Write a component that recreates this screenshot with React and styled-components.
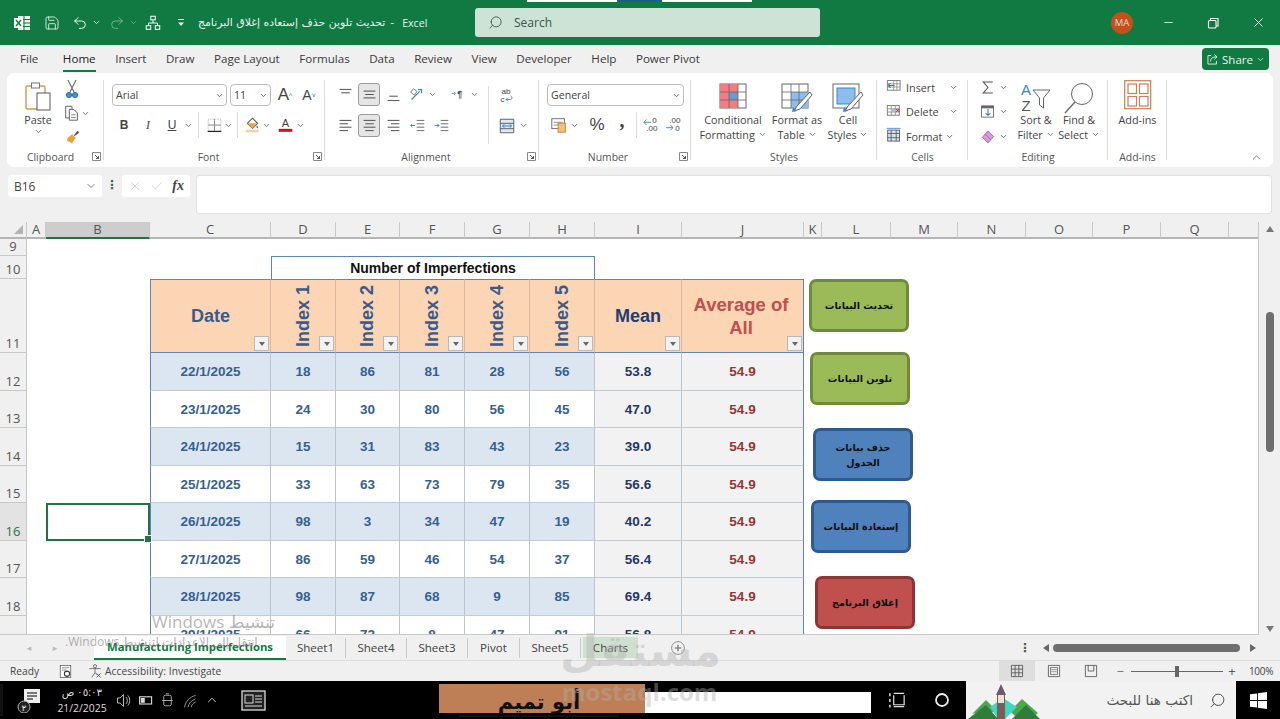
import React from "react";
import styled, { createGlobalStyle } from "styled-components";
import { Search, Minus, X, ChevronDown, ChevronUp, Check, Undo2, Redo2, Save } from "lucide-react";

const Global = createGlobalStyle`
  html,body{margin:0;padding:0;width:1280px;height:719px;overflow:hidden;background:#f0f0f0;}
  *{box-sizing:border-box;}
  body{font-family:"Open Sans","DejaVu Sans",sans-serif;}
`;
const Page = styled.div`position:relative;width:1280px;height:719px;overflow:hidden;display:flex;flex-direction:column;`;

/* ---------- title bar ---------- */
const TitleBar = styled.header`position:relative;height:45px;flex:none;background:#117a43;color:#fff;display:flex;align-items:center;`;
const TopStrip = styled.div`position:absolute;top:0;left:527px;width:225px;height:2px;background:linear-gradient(90deg,#fff 0 40%,#1b5e8a 40% 60%,#fff 60%);`;
const QuickBar = styled.div`width:475px;flex:none;display:flex;align-items:center;padding-left:10px;`;
const Slot = styled.span`display:inline-flex;flex:none;align-items:center;justify-content:center;width:${p=>p.$w||20}px;height:${p=>p.$h||20}px;color:${p=>p.$c||"inherit"};margin-left:${p=>p.$ml||0}px;opacity:${p=>p.$o||1};`;
const DocTitle = styled.span`font-size:10.9px;margin-left:9px;white-space:nowrap;color:#e8f3ec;display:flex;gap:5px;align-items:center;font-family:"DejaVu Sans",sans-serif;`;
const DocApp = styled.span`font:10.6px "Open Sans",sans-serif;margin-left:3px;`;
const SearchBox = styled.div`width:345px;height:29px;background:#cde3d6;border-radius:3px;display:flex;align-items:center;padding-left:13px;gap:11px;color:#37574a;font-size:12px;`;
const WinControls = styled.div`margin-left:auto;display:flex;align-items:center;padding-right:12px;`;
const Avatar = styled.span`width:22px;height:22px;border-radius:50%;background:#c4501a;color:#f3d9c9;font-size:9.5px;display:flex;align-items:center;justify-content:center;margin-right:25px;`;

/* ---------- tabs ---------- */
const TabRow = styled.nav`height:28px;flex:none;background:#f0f0f0;display:flex;align-items:center;padding-left:20px;gap:19.5px;position:relative;font-size:11.6px;color:#3a3a3a;`;
const Tab = styled.span`position:relative;white-space:nowrap;line-height:26px;${p=>p.$first&&"margin-right:5px;"}${p=>p.$on&&`color:#222;&::after{content:"";position:absolute;left:0;right:0;bottom:0;height:2px;background:#117a43;}`}`;
const ShareBtn = styled.button`margin-left:auto;margin-right:11px;width:67px;height:22px;border:0;border-radius:4px;background:#117a43;color:#e8f3ec;font:11.5px "Open Sans",sans-serif;display:flex;align-items:center;justify-content:center;gap:3px;padding:0;`;

/* ---------- ribbon ---------- */
const Ribbon = styled.section`margin:0 7px;width:1266px;height:94px;flex:none;background:#fff;border-radius:7px;display:flex;padding-top:2px;font-size:11px;color:#444;position:relative;`;
const Group = styled.div`width:${p=>p.$w}px;flex:none;display:flex;flex-direction:column;height:91px;padding-bottom:0;position:relative;${p=>!p.$last&&`&::after{content:"";position:absolute;right:0;top:5px;bottom:6px;width:1px;background:#dcdcdc;}`}`;
const GroupBody = styled.div`flex:1;min-height:0;display:flex;flex-direction:${p=>p.$col?"column":"row"};padding-left:${p=>p.$pl||0}px;gap:${p=>p.$gap||0}px;padding-top:${p=>p.$pt||0}px;`;
const GroupFoot = styled.div`height:17px;flex:none;position:relative;text-align:center;font-size:10.4px;line-height:17px;color:#555;padding-right:${p=>p.$lp||0}px;`;
const Launcher = styled.span`position:absolute;right:3px;top:3px;width:9px;height:9px;display:flex;`;
const Stack = styled.div`display:flex;flex-direction:column;align-items:${p=>p.$a||"center"};width:${p=>p.$w}px;flex:none;padding-left:${p=>p.$pl||0}px;`;
const Row = styled.div`display:flex;align-items:center;height:${p=>p.$h||22}px;margin-top:${p=>p.$mt||0}px;`;
const Sel = styled.div`height:22px;width:${p=>p.$w}px;margin-right:${p=>p.$mr||0}px;border:1px solid #bdbdbd;border-radius:4px;background:#fff;display:flex;align-items:center;justify-content:space-between;padding:0 2px 0 3px;font-size:10.6px;color:#444;flex:none;`;
const Sep = styled.span`width:1px;height:26px;background:#dcdcdc;flex:none;margin:0 ${p=>p.$m||4}px;`;
const TallSep = styled.span`width:1px;height:58px;background:#dcdcdc;flex:none;margin:3px 0 0;`;
const Toggled = styled.span`width:22px;height:23px;margin:0 1px;display:flex;align-items:center;justify-content:center;border-radius:3px;border:1px solid #9a9a9a;background:#e6e6e6;flex:none;`;
const Glyph = styled.span`display:inline-flex;justify-content:center;align-items:center;width:${p=>p.$w||20}px;font:${p=>p.$f||"11px 'Liberation Sans',sans-serif"};color:#444;flex:none;margin-left:${p=>p.$ml||0}px;${p=>p.$u&&"text-decoration:underline;"}${p=>p.$up&&"height:20px;transform:translateY(-5px);"}`;
const Tick = styled.sup`font-size:7px;color:#2a76c0;`;
const BigItem = styled.div`display:flex;flex-direction:column;align-items:center;width:${p=>p.$w}px;flex:none;line-height:15px;font-size:10.8px;color:#444;text-align:center;margin-left:${p=>p.$ml||0}px;margin-top:${p=>p.$mt||0}px;`;
const BigIcon = styled.div`height:${p=>p.$h||29}px;display:flex;align-items:flex-start;justify-content:center;`;
const CellItem = styled.div`height:24.5px;display:flex;align-items:center;gap:3px;font-size:10.8px;white-space:nowrap;`;
const Caret = styled.span`position:absolute;right:10px;bottom:3px;display:flex;color:#555;`;
const Mini = () => <ChevronDown size={9} strokeWidth={2.2} color="#555" />;

/* ---------- formula bar ---------- */
const FormulaBar = styled.div`height:55px;flex:none;background:#f0f0f0;display:flex;align-items:flex-start;padding:8px 8px 0;`;
const NameBox = styled.div`width:94px;height:22px;background:#fff;border-radius:3px;display:flex;align-items:center;justify-content:space-between;padding:0 5px 0 6px;font:12px "Open Sans",sans-serif;color:#444;`;
const Dots = styled.span`width:20px;text-align:center;font:bold 12px "DejaVu Sans",sans-serif;line-height:20px;color:#555;margin-right:${p=>p.$mr||0}px;`;
const FxBox = styled.div`width:68px;height:22px;background:#fff;border-radius:3px;display:flex;align-items:center;justify-content:space-around;padding:0 2px;color:#bbb;`;
const Fx = styled.i`font:italic bold 14px "Liberation Serif",serif;color:#444;`;
const FormulaInput = styled.div`margin-left:6px;flex:1;height:39px;background:#fff;border:1px solid #e2e2e2;border-radius:3px;`;

/* ---------- sheet ---------- */
const SheetArea = styled.main`height:413px;flex:none;display:flex;position:relative;overflow:hidden;background:#fff;`;
const cols=[27,19,104,121,65,64,65,65,65,87,122,18,69,67,68,67,68,68,68];
const rows=[17,17,23,74,38,37,38,37,38,37,38,37];
const Sheet = styled.div`width:1259px;flex:none;height:413px;display:grid;grid-template-columns:${cols.map(c=>c+"px").join(" ")};grid-template-rows:${rows.map(c=>c+"px").join(" ")};font-family:"Liberation Sans",sans-serif;border-right:1px solid #c8c8c8;border-bottom:1px solid #c8c8c8;overflow:hidden;`;
const Corner = styled.div`background:#f0f0f0;border-bottom:2px solid #b5b5b5;border-right:1px solid #c8c8c8;position:relative;&::after{content:"";position:absolute;right:3px;bottom:3px;border-style:solid;border-width:0 0 9px 9px;border-color:transparent transparent #b4b4b4 transparent;}`;
const ColHead = styled.div`background:${p=>p.$on?"#cdcdcd":"#f0f0f0"};border-bottom:2px solid ${p=>p.$on?"#217346":"#b5b5b5"};border-right:1px solid #c8c8c8;font:13px/15px "Open Sans",sans-serif;color:#555;display:flex;align-items:center;justify-content:center;`;
const RowHead = styled.div`background:${p=>p.$on?"#e3e3e3":"#f0f0f0"};border-bottom:1px solid #c8c8c8;border-right:1px solid #c8c8c8;font:13px/17px "Open Sans",sans-serif;color:${p=>p.$on?"#217346":"#555"};display:flex;align-items:flex-end;justify-content:center;`;
const Blank = styled.div`position:relative;${p=>p.$sel&&`border:2px solid #217346;&::after{content:"";position:absolute;right:-4px;bottom:-4px;width:6px;height:6px;background:#217346;border:1px solid #fff;}`}`;
const Banner = styled.div`grid-column:span 5;border:1px solid #5f86b3;border-bottom:0;font-size:14px;font-weight:700;color:#111;display:flex;align-items:center;justify-content:center;`;
const HeadCell = styled.div`position:relative;background:#fcd5b4;border-top:1px solid #5f86b3;border-bottom:1.5px solid #5f86b3;border-right:1px solid ${p=>p.$end?"#5f86b3":"#d9b9a0"};${p=>p.$start&&"border-left:1px solid #5f86b3;"}font-size:18px;font-weight:700;color:${p=>p.$c||"#3a5a8c"};display:flex;align-items:center;justify-content:center;text-align:center;line-height:23px;`;
const WideLabel = styled.span`font-size:18.5px;margin-right:3px;`;
const Vertical = styled.span`writing-mode:vertical-rl;transform:rotate(180deg);align-self:flex-end;padding-top:5px;white-space:nowrap;`;
const Filter = styled.span`position:absolute;right:1px;bottom:1px;width:15px;height:15px;background:#f2f2f2;border:1px solid #b9b9b9;display:flex;align-items:center;justify-content:center;&::after{content:"";border-style:solid;border-width:4px 3px 0 3px;border-color:#666 transparent transparent transparent;}`;
const Td = styled.div`background:${p=>p.$bg||"#fff"};border-bottom:1px solid #c4cbd4;border-right:1px solid ${p=>p.$end?"#5f86b3":"#bcc5cf"};${p=>p.$start&&"border-left:1px solid #5f86b3;"}font-size:13.5px;font-weight:700;color:${p=>p.$c||"#366092"};display:flex;align-items:center;justify-content:center;`;
const Macro = styled.button`position:absolute;left:${p=>p.$x}px;top:${p=>p.$y}px;width:100px;height:53px;border:3px solid ${p=>p.$edge};background:${p=>p.$bg};border-radius:7px;font:bold 9.6px "DejaVu Sans",sans-serif;color:#111;padding:0 6px;line-height:15px;white-space:nowrap;`;
const VScroll = styled.div`width:21px;flex:none;background:#f0f0f0;height:413px;position:relative;display:flex;flex-direction:column;align-items:center;justify-content:space-between;padding:4px 0 3px;`;
const VThumb = styled.span`position:absolute;left:7px;top:90px;width:8px;height:140px;border-radius:4px;background:#6f6f6f;`;
const Tri = styled.span`width:0;height:0;border-style:solid;${p=>({u:"border-width:0 4px 6px 4px;border-color:transparent transparent #777 transparent;",d:"border-width:6px 4px 0 4px;border-color:#777 transparent transparent transparent;",l:"border-width:4px 6px 4px 0;border-color:transparent #666 transparent transparent;",r:"border-width:4px 0 4px 6px;border-color:transparent transparent transparent #666;"}[p.$d])}`;

/* ---------- sheet tabs ---------- */
const TabStrip = styled.div`height:26px;flex:none;background:#f0f0f0;display:flex;align-items:center;font-size:11.6px;color:#444;border-bottom:1px solid #dcdcdc;position:relative;`;
const Nav = styled.div`width:94px;flex:none;display:flex;justify-content:space-around;padding:0 26px 0 16px;color:#bbb;font-size:9px;`;
const SheetTab = styled.span`height:${p=>p.$on?"24px":"20px"};width:${p=>p.$w}px;flex:none;display:flex;align-items:center;justify-content:center;white-space:nowrap;${p=>p.$on?"background:#fff;color:#117a43;font-weight:700;font-size:11.3px;border-bottom:2px solid #117a43;":"border-right:1px solid #c8c8c8;"}${p=>p.$tint&&"background:#cfe0d0;border:0;align-self:stretch;height:auto;margin:2px 0 2px 2px;"}`;
const HScroll = styled.div`margin-left:auto;display:flex;align-items:center;padding-right:24px;`;
const HThumb = styled.span`width:187px;height:8px;border-radius:4px;background:#6f6f6f;margin:0 10px 0 4px;`;

/* ---------- status bar ---------- */
const StatusBar = styled.footer`height:20px;flex:none;background:#f0f0f0;display:flex;align-items:center;padding-left:10px;font-size:10.2px;color:#444;`;
const StatusText = styled.span`margin-left:2px;letter-spacing:.1px;`;
const StatusRight = styled.div`margin-left:auto;display:flex;align-items:center;height:100%;`;
const ViewBtn = styled.span`width:36px;height:100%;display:flex;align-items:center;justify-content:center;background:${p=>p.$on?"#dedede":"transparent"};flex:none;margin-right:1px;`;
const Zoomer = styled.div`width:92px;height:1px;background:#666;position:relative;margin:0 4px;&::after{content:"";position:absolute;left:44px;top:-5px;width:4px;height:11px;background:#666;}`;
const PlusMark = styled.span`width:10px;text-align:center;color:#555;font-size:13px;`;
const Pct = styled.span`width:38px;margin-left:5px;text-align:center;font-size:10px;letter-spacing:-.3px;`;

/* ---------- taskbar ---------- */
const Taskbar = styled.div`height:38px;flex:none;background:#000;display:flex;align-items:center;color:#ddd;font-size:11px;position:relative;`;
const Tray = styled.div`width:439px;flex:none;display:flex;align-items:center;padding-left:14px;border-left:3px solid #111;`;
const Clock = styled.div`display:flex;flex-direction:column;align-items:center;width:54px;margin-left:12px;font-size:10.4px;line-height:16px;`;
const Banner2 = styled.div`width:432px;height:38px;flex:none;position:relative;display:flex;align-items:flex-start;`;
const Brown = styled.div`width:206px;height:29px;margin-top:3px;background:#bf7f56;flex:none;`;
const WhiteBar = styled.div`width:226px;height:21px;margin-top:11px;background:#fff;flex:none;`;
const Signed = styled.span`position:absolute;left:20px;top:8px;width:160px;text-align:center;font:bold 21px "DejaVu Sans",serif;color:#111;border-bottom:2px solid #111;line-height:26px;`;
const SearchTask = styled.div`width:270px;height:38px;margin-left:auto;background:#f2f2f2;display:flex;align-items:center;justify-content:flex-end;color:#555;font:13.6px "DejaVu Sans",sans-serif;gap:8px;padding-right:9px;position:relative;overflow:hidden;`;
const Scene = styled.svg`position:absolute;left:0;top:0;`;
const WinBtn = styled.div`width:44px;height:38px;flex:none;display:flex;align-items:center;justify-content:center;`;

/* ---------- over-page watermarks ---------- */
const ActivateA = styled.div`position:absolute;left:152px;top:610px;font:17px "Open Sans","DejaVu Sans",sans-serif;color:rgba(120,120,120,.55);white-space:nowrap;`;
const ActivateB = styled.div`position:absolute;left:65px;top:633px;font:12px "Open Sans","DejaVu Sans",sans-serif;color:rgba(120,120,120,.6);white-space:nowrap;`;
const MarkAr = styled.div`position:absolute;left:560px;top:625px;width:160px;text-align:center;font:bold 44px "DejaVu Sans",sans-serif;color:rgba(175,175,175,.42);white-space:nowrap;`;
const MarkEn = styled.div`position:absolute;left:562px;top:675px;font:bold 24px "Open Sans",sans-serif;color:rgba(175,175,175,.42);white-space:nowrap;`;

/* ---------- icons ---------- */
const S = ({w=18,h=18,vb="0 0 20 20",children,...r}) => <svg width={w} height={h} viewBox={vb} fill="none" {...r}>{children}</svg>;
const XlIcon = () => <S w={20} h={20}><rect x="6" y="3" width="12" height="14" fill="#fff" opacity=".9"/><path d="M6 6.5h12M6 10h12M6 13.5h12M12 3v14" stroke="#117a43"/><rect x="2" y="5" width="9" height="10" fill="#fff"/><path d="M4 7l5 6M9 7l-5 6" stroke="#117a43" strokeWidth="1.4"/></S>;
const OrgIcon = () => <S w={18} h={18}><g stroke="#fff" strokeWidth="1.1"><rect x="7.5" y="2.5" width="5" height="4"/><rect x="2.5" y="13" width="5" height="4"/><rect x="12.5" y="13" width="5" height="4"/><path d="M10 6.5V10M5 13v-3h10v3"/></g></S>;
const Customize = () => <S w={10} h={10} vb="0 0 10 10"><path d="M2 1.5h6" stroke="#fff"/><path d="M2 4.5h6L5 8z" fill="#fff"/></S>;
const ShareIc = () => <S w={13} h={13}><path d="M8 4H3v13h13v-5" stroke="#e8f3ec" strokeWidth="1.4"/><path d="M7 13c0-5 3-7 9-7M13 2.5L17 6l-4 3.5" stroke="#e8f3ec" strokeWidth="1.4"/></S>;
const PasteIcon = () => <S w={30} h={31} vb="0 0 30 31"><rect x="3" y="5" width="19" height="23" rx="1.5" fill="#fff" stroke="#d39a47" strokeWidth="1.4"/><rect x="8.5" y="2" width="8" height="5" fill="#fff" stroke="#777"/><rect x="14" y="12" width="13" height="17" fill="#fff" stroke="#666" strokeWidth="1.1"/></S>;
const CutIcon = () => <S w={14} h={20} vb="0 0 14 20"><path d="M3 1l6 12M11 1L5 13" stroke="#666" strokeWidth="1.1"/><circle cx="4" cy="16" r="2.6" fill="#4a90d0" stroke="#2a6fb0"/><circle cx="10" cy="16" r="2.6" fill="#4a90d0" stroke="#2a6fb0"/></S>;
const CopyIcon = () => <S w={18} h={18}><path d="M3 2.5h7v13H3z" fill="#fff" stroke="#555"/><path d="M7 6h5l4 4v8H7z" fill="#fff" stroke="#555"/><path d="M9 12h5M9 15h5" stroke="#777"/></S>;
const Painter = () => <S w={18} h={18}><path d="M11 8l4-5 2 2-5 4z" fill="#555"/><path d="M4 11l5-4 4 4-4 6-6-3z" fill="#e8a33d"/></S>;
const Launch = () => <S w={9} h={9} vb="0 0 9 9"><path d="M.5.5h8v8h-8z" stroke="#888"/><path d="M3 3l3.5 3.5M6.5 4v2.5H4" stroke="#555"/></S>;
const Borders = () => <S w={17} h={17}><path d="M2.5 2.5h15v14h-15z" stroke="#aaa" strokeDasharray="1 1"/><path d="M10 2.5v14M2.5 9.5h15" stroke="#777"/><path d="M2 17h16" stroke="#222" strokeWidth="1.4"/></S>;
const FillIcon = () => <S w={17} h={18}><path d="M10 2l6 6-6 6-6-6z" fill="#fff" stroke="#555" strokeWidth="1.2"/><path d="M15 10c1 1.6 2 2.4 1.5 3.4-.8 1-2.2 0-1.5-3.4z" fill="#555"/><path d="M4 8h11l-5 6z" fill="#f2a14a"/><rect x="2" y="15.5" width="15" height="3" fill="#f7cfa6"/></S>;
const FontColor = () => <S w={17} h={18}><text x="10" y="12.5" fontSize="13" textAnchor="middle" fontFamily="Liberation Sans" fill="#444">A</text><rect x="2" y="14.5" width="16" height="3.5" fill="#c8102e"/></S>;
const Lines = ({ys,xs,c="#555"}) => <S w={17} h={17}>{ys.map((y,i)=><path key={i} d={`M${xs[i][0]} ${y}H${xs[i][1]}`} stroke={c} strokeWidth="1.2"/>)}</S>;
const Orient = () => <S w={18} h={18}><path d="M4 15l9-9" stroke="#3a86d0" strokeWidth="1.4"/><path d="M11 4h4v4" stroke="#3a86d0" strokeWidth="1.4"/><path d="M3 7l3-4 4 3-3 4z" stroke="#777"/></S>;
const Rtl = () => <S w={16} h={16}><path d="M2 8h4M5 6l2 2-2 2" stroke="#3a86d0"/><text x="12" y="12" fontSize="11" textAnchor="middle" fill="#444" fontFamily="Liberation Sans" fontWeight="700">¶</text></S>;
const Wrap = () => <S w={18} h={20}><text x="9" y="9" fontSize="9" textAnchor="middle" fill="#444" fontFamily="Liberation Sans">ab</text><text x="5" y="18" fontSize="9" textAnchor="middle" fill="#444" fontFamily="Liberation Sans">c</text><path d="M9 15h5c2 0 2-4 0-4M9 15l2-2M9 15l2 2" stroke="#3a86d0"/></S>;
const Merge = () => <S w={18} h={18}><path d="M2.5 2.5h15v15h-15z" fill="#dbeaf8" stroke="#555"/><path d="M2.5 7h15M2.5 13h15" stroke="#555"/><path d="M5 10h10M5 10l2-2M5 10l2 2M15 10l-2-2M15 10l-2 2" stroke="#2a76c0"/></S>;
const IndentL = () => <S w={17} h={17}><path d="M9 4h9M9 8h9M9 12h9M9 16h9" stroke="#555"/><path d="M2 10h5M2 10l2-2M2 10l2 2" stroke="#2a76c0"/></S>;
const IndentR = () => <S w={17} h={17}><path d="M9 4h9M9 8h9M9 12h9M9 16h9" stroke="#555"/><path d="M2 10h5M7 10l-2-2M7 10l-2 2" stroke="#2a76c0"/></S>;
const Acct = () => <S w={18} h={18}><rect x="2" y="3" width="14" height="11" fill="#fff" stroke="#666"/><path d="M4 7h10M4 10h10" stroke="#888"/><rect x="9" y="8" width="8" height="10" fill="#f4c07a" stroke="#c67f28"/></S>;
const DecL = () => <S w={20} h={18}><text x="14" y="8" fontSize="9" textAnchor="middle" fill="#444" fontFamily="Liberation Sans">0</text><text x="11" y="17" fontSize="9" textAnchor="middle" fill="#444" fontFamily="Liberation Sans">.00</text><path d="M2 7h8M2 7l3-3M2 7l3 3" stroke="#3a86d0"/></S>;
const DecR = () => <S w={20} h={18}><text x="12" y="8" fontSize="9" textAnchor="middle" fill="#444" fontFamily="Liberation Sans">.00</text><text x="15" y="17" fontSize="9" textAnchor="middle" fill="#444" fontFamily="Liberation Sans">0</text><path d="M2 13h8M10 13l-3-3M10 13l-3 3" stroke="#3a86d0"/></S>;
const CondFmt = () => <S w={28} h={26} vb="0 0 28 26"><rect x="1" y="1" width="26" height="24" fill="#fff" stroke="#666"/><path d="M1 1h18v8H10v8h9v8H1z" fill="#f47c80"/><rect x="10" y="9" width="9" height="8" fill="#6b9ad0"/><path d="M10 1v24M19 1v24M1 9h26M1 17h26" stroke="#666" strokeWidth=".8"/></S>;
const TblFmt = () => <S w={32} h={30} vb="0 0 32 30"><rect x="1" y="1" width="26" height="24" fill="#fff" stroke="#666"/><rect x="10" y="9" width="17" height="16" fill="#8dbdec"/><path d="M10 1v24M18 1v24M1 9h26M1 17h26" stroke="#666" strokeWidth=".8"/><path d="M29 9L16 23l-3 5 6-2 12-14z" fill="#fff" stroke="#666"/><path d="M12 24l4 4-5 1z" fill="#3a86d0"/></S>;
const CellSty = () => <S w={32} h={30} vb="0 0 32 30"><rect x="1" y="1" width="26" height="24" fill="#fff" stroke="#666"/><rect x="5" y="5" width="18" height="16" fill="#8dbdec" stroke="#3a86d0"/><path d="M29 9L16 23l-3 5 6-2 12-14z" fill="#fff" stroke="#666"/><path d="M12 24l4 4-5 1z" fill="#3a86d0"/></S>;
const InsIcon = () => <S w={17} h={16}><rect x="1" y="2" width="16" height="12" fill="#fff" stroke="#666"/><path d="M1 6h16M1 10h16M9 2v12M13 2v12" stroke="#888"/><path d="M10 8H2M2 8l3-3M2 8l3 3" stroke="#2a76c0" strokeWidth="1.3"/></S>;
const DelIcon = () => <S w={17} h={16}><rect x="1" y="2" width="15" height="12" fill="#fff" stroke="#666"/><path d="M1 6h15M1 10h15M6 2v12M11 2v12" stroke="#888"/><rect x="6" y="6" width="5" height="4" fill="#9cc4ea"/><path d="M12 6l4 4M16 6l-4 4" stroke="#d13438" strokeWidth="1.3"/></S>;
const FmtIcon = () => <S w={17} h={18}><rect x="2" y="3" width="14" height="13" fill="#cfe3f7" stroke="#555"/><path d="M2 7h14M2 12h14M6 3v13M12 3v13" stroke="#555"/><path d="M1 1h16" stroke="#3a86d0"/></S>;
const Sigma = () => <S w={16} h={17}><path d="M16 3H4l6 7-6 7h12" stroke="#555" strokeWidth="1.3"/></S>;
const FillDown = () => <S w={16} h={17}><rect x="2" y="3" width="15" height="14" fill="#fff" stroke="#555"/><rect x="2" y="3" width="15" height="3" fill="#666"/><path d="M10 7v8M10 15l-3-3M10 15l3-3" stroke="#2a76c0" strokeWidth="1.3"/></S>;
const Eraser = () => <S w={16} h={17}><path d="M3 11l7-8 7 7-7 8z" fill="#d89ad8" stroke="#a050a8"/><path d="M6.5 7l7 7" stroke="#a050a8"/></S>;
const SortIcon = () => <S w={34} h={34} vb="0 0 34 34"><text x="7" y="14" fontSize="15" textAnchor="middle" fill="#3a86d0" fontFamily="Liberation Sans">A</text><text x="7" y="30" fontSize="15" textAnchor="middle" fill="#555" fontFamily="Liberation Sans">Z</text><path d="M14 9h17l-6.5 8v10l-4-3v-7z" stroke="#666" fill="#fff"/></S>;
const Lens = () => <S w={34} h={34} vb="0 0 34 34"><circle cx="20" cy="13" r="10.5" stroke="#666" fill="#fff"/><path d="M13 21L3 32" stroke="#666" strokeWidth="1.3"/></S>;
const AddIns = () => <S w={28} h={30} vb="0 0 28 30"><rect x=".7" y=".7" width="26" height="28" fill="#fff" stroke="#cf7b5c" strokeWidth="1.2"/><rect x="4" y="4" width="8.5" height="9.5" stroke="#cf7b5c" strokeWidth="1.2"/><rect x="15.5" y="4" width="8.5" height="9.5" stroke="#cf7b5c" strokeWidth="1.2"/><rect x="4" y="16.5" width="8.5" height="9.5" stroke="#cf7b5c" strokeWidth="1.2"/><rect x="15.5" y="16.5" width="8.5" height="9.5" stroke="#cf7b5c" strokeWidth="1.2"/></S>;
const Restore = () => <S w={14} h={14} vb="0 0 14 14"><rect x="2.5" y="4.5" width="7.5" height="7.5" rx="1" stroke="#fff" strokeWidth="1.1"/><path d="M4.5 4.5V2.5h7.5v7.5h-2" stroke="#fff" strokeWidth="1.1"/></S>;
const MacroIc = () => <S w={15} h={15}><rect x="3" y="2" width="14" height="16" fill="#fff" stroke="#555"/><path d="M5 5h10M5 8h6" stroke="#666"/><circle cx="12" cy="13" r="3.5" stroke="#333" strokeWidth="1.4"/></S>;
const A11y = () => <S w={16} h={16}><circle cx="10" cy="4" r="2" stroke="#555"/><path d="M3 7h14M10 7v5M10 12l-4 6M10 12l3 3" stroke="#555"/><path d="M12 13l5 5M17 13l-5 5" stroke="#333"/></S>;
const VNormal = () => <S w={14} h={14}><path d="M2 2h16v16H2zM2 7.3h16M2 12.6h16M7.3 2v16M12.6 2v16" stroke="#555" strokeWidth="1.2"/></S>;
const VLayout = () => <S w={14} h={14}><path d="M2 2h16v16H2z" stroke="#555" strokeWidth="1.2"/><path d="M5 5h10v10H5z" stroke="#555"/><path d="M6 8h8M6 11h8" stroke="#777"/></S>;
const VBreak = () => <S w={14} h={14}><path d="M2 2h16v16H2z" stroke="#555" strokeWidth="1.2"/><path d="M6 2v8h8V2" stroke="#555" strokeWidth="1.2"/></S>;
const Plus = () => <S w={16} h={16}><circle cx="10" cy="10" r="8" stroke="#777"/><path d="M10 6v8M6 10h8" stroke="#666" strokeWidth="1.4"/></S>;
const W = "#d8d8d8";
const Notif = () => <S w={26} h={26} vb="0 0 26 26"><path d="M7 2h16v14H12l-4 3v-3H7z" fill="#eee"/><path d="M10 6h10M10 9h10M10 12h6" stroke="#000"/><circle cx="7" cy="20" r="6" fill="#222" stroke="#aaa"/><text x="7" y="24" fontSize="9" fill="#eee" textAnchor="middle">۲</text></S>;
const Speaker = () => <S w={17} h={17}><path d="M3 7h3l4-4v14l-4-4H3z" stroke={W}/><path d="M13 6c2 2 2 6 0 8M15 4c3 3 3 9 0 12" stroke={W}/></S>;
const Batt = () => <S w={16} h={16}><rect x="2" y="6" width="15" height="9" stroke={W} strokeWidth="1.4"/><rect x="3.5" y="7.5" width="5" height="6" fill={W}/></S>;
const Tablet = () => <S w={15} h={19}><rect x="5" y="3" width="10" height="14" rx="2" stroke={W}/><path d="M3 10h14M8 1h4" stroke={W}/></S>;
const Wifi = () => <S w={17} h={17}><path d="M3 18C4 11 9 6 16 4M7 18c1-5 4-8 9-10M11 18c0-3 2-5 5-6" stroke="#aaa"/></S>;
const News = () => <S w={25} h={23} vb="0 0 25 23"><rect x="1" y="2" width="23" height="19" fill="#222" stroke="#ddd" strokeWidth="1.3"/><rect x="4" y="6" width="8" height="8" stroke="#ddd"/><path d="M14 7h7M14 10h7M14 13h7M4 17h17" stroke="#ddd"/></S>;
const TaskView = () => <S w={19} h={20}><path d="M6 3h11M6 17h11M6 5v10h11V5" stroke="#ddd" strokeWidth="1.3"/><path d="M2 3v3M2 9v3M2 15v3" stroke="#ddd" strokeWidth="1.6"/></S>;
const WinLogo = () => <S w={17} h={17} vb="0 0 16 16"><path d="M0 2.2L6.6 1.3V7.6H0zM7.4 1.2L16 0V7.6H7.4zM0 8.4H6.6V14.7L0 13.8zM7.4 8.4H16V16L7.4 14.8z" fill="#fff"/></S>;

const colNames="A B C D E F G H I J K L M N O P Q R".split(" ");
const data=[
["22/1/2025",18,86,81,28,56,"53.8"],["23/1/2025",24,30,80,56,45,"47.0"],["24/1/2025",15,31,83,43,23,"39.0"],["25/1/2025",33,63,73,79,35,"56.6"],
["26/1/2025",98,3,34,47,19,"40.2"],["27/1/2025",86,59,46,54,37,"56.4"],["28/1/2025",98,87,68,9,85,"69.4"],["29/1/2025",66,72,8,47,91,"56.8"]];
const Blanks = ({n,sel}) => Array.from({length:n},(_,i)=><Blank key={i} $sel={sel===i}/>);

const tabs=["File","Home","Insert","Draw","Page Layout","Formulas","Data","Review","View","Developer","Help","Power Pivot"];
const sheets=[["Sheet1",60],["Sheet4",61],["Sheet3",61],["Pivot",52],["Sheet5",61]];

export default function App(){
  return <Page>
    <Global/>
    <TitleBar>
      <TopStrip/>
      <QuickBar>
        <Slot $w={24}><XlIcon/></Slot>
        <Slot $w={24} $ml={6}><Save size={16} strokeWidth={1.2}/></Slot>
        <Slot $w={22} $ml={5}><Undo2 size={16} strokeWidth={1.4}/></Slot>
        <Slot $w={10}><ChevronDown size={9}/></Slot>
        <Slot $w={22} $ml={5} $o={.45}><Redo2 size={16} strokeWidth={1.4}/></Slot>
        <Slot $w={10} $o={.45}><ChevronDown size={9}/></Slot>
        <Slot $w={20} $ml={5}><OrgIcon/></Slot>
        <Slot $w={16} $ml={10}><Customize/></Slot>
        <DocTitle><span dir="rtl">تحديث تلوين حذف إستعاده إغلاق البرنامج</span><span>-</span><DocApp>Excel</DocApp></DocTitle>
      </QuickBar>
      <SearchBox><Search size={15} strokeWidth={1.4} style={{transform:"scaleX(-1)"}}/>Search</SearchBox>
      <WinControls>
        <Avatar>MA</Avatar>
        <Slot $w={20}><Minus size={13} strokeWidth={1.4}/></Slot>
        <Slot $w={20} $ml={25}><Restore/></Slot>
        <Slot $w={20} $ml={25}><X size={15} strokeWidth={1.4}/></Slot>
      </WinControls>
    </TitleBar>

    <TabRow>
      {tabs.map((t,i)=><Tab key={t} $first={i===0} $on={t==="Home"}>{t}</Tab>)}
      <ShareBtn><ShareIc/>Share<ChevronDown size={9}/></ShareBtn>
    </TabRow>

    <Ribbon>
      <Group $w={97}>
        <GroupBody $pt={3}>
          <BigItem $w={50} $ml={6} $mt={3}><BigIcon $h={31}><PasteIcon/></BigIcon>Paste<Mini/></BigItem>
          <Stack $w={30} $a="flex-start">
            <Slot $h={22} $w={18}><CutIcon/></Slot>
            <Row $h={26}><CopyIcon/><Mini/></Row>
            <Slot $h={22}><Painter/></Slot>
          </Stack>
        </GroupBody>
        <GroupFoot $lp={10}>Clipboard<Launcher><Launch/></Launcher></GroupFoot>
      </Group>

      <Group $w={221}>
        <GroupBody $col $pl={8} $pt={9}>
          <Row>
            <Sel $w={115} $mr={3}>Arial<Mini/></Sel>
            <Sel $w={41}>11<Mini/></Sel>
            <Glyph $w={24} $ml={2} $f="17px 'Liberation Sans',sans-serif">A<Tick>^</Tick></Glyph>
            <Glyph $w={24} $f="14px 'Liberation Sans',sans-serif">A<Tick>˅</Tick></Glyph>
          </Row>
          <Row $mt={8}>
            <Glyph $f="bold 12px 'Liberation Sans',sans-serif" $w={24}>B</Glyph>
            <Glyph $f="italic 12px 'Liberation Serif',serif" $w={24}>I</Glyph>
            <Glyph $f="12px 'Liberation Sans',sans-serif" $w={24} $u>U</Glyph>
            <Mini/><Sep $m={5}/>
            <Slot $w={20}><Borders/></Slot><Mini/><Sep $m={4}/>
            <Slot $w={20}><FillIcon/></Slot><Mini/>
            <Slot $w={22} $ml={3}><FontColor/></Slot><Mini/>
          </Row>
        </GroupBody>
        <GroupFoot $lp={12}>Font<Launcher><Launch/></Launcher></GroupFoot>
      </Group>

      <Group $w={214}>
        <GroupBody $pl={8} $pt={8}>
          <Stack $w={155} $a="flex-start">
            <Row $h={23}>
              <Slot $w={24}><Lines ys={[4,8]} xs={[[3,17],[5,15]]}/></Slot>
              <Slot $w={24}><Toggled><Lines ys={[6,10,14]} xs={[[3,17],[5,15],[3,17]]}/></Toggled></Slot>
              <Slot $w={24}><Lines ys={[12,17]} xs={[[5,15],[3,17]]}/></Slot>
              <Slot $w={22} $ml={1}><Orient/></Slot><Mini/>
              <Slot $w={24} $ml={9}><Rtl/></Slot><Mini/>
            </Row>
            <Row $h={23} $mt={8}>
              <Slot $w={24}><Lines ys={[4,8,12,16]} xs={[[3,17],[3,13],[3,17],[3,13]]}/></Slot>
              <Slot $w={24}><Toggled><Lines ys={[4,8,12,16]} xs={[[3,17],[5,15],[3,17],[5,15]]}/></Toggled></Slot>
              <Slot $w={24}><Lines ys={[4,8,12,16]} xs={[[3,17],[7,17],[3,17],[7,17]]}/></Slot>
              <Slot $w={24}><IndentL/></Slot>
              <Slot $w={24}><IndentR/></Slot>
            </Row>
          </Stack>
          <TallSep/>
          <Stack $w={40} $pl={6} $a="flex-start">
            <Row $h={23}><Slot $w={24}><Wrap/></Slot></Row>
            <Row $h={23} $mt={8}><Slot $w={24}><Merge/></Slot><Mini/></Row>
          </Stack>
        </GroupBody>
        <GroupFoot $lp={12}>Alignment<Launcher><Launch/></Launcher></GroupFoot>
      </Group>

      <Group $w={152}>
        <GroupBody $col $pl={8} $pt={9}>
          <Sel $w={137}>General<Mini/></Sel>
          <Row $mt={8}>
            <Slot $w={22} $ml={1}><Acct/></Slot><Mini/>
            <Glyph $w={28} $ml={4} $f="17px 'Liberation Sans',sans-serif">%</Glyph>
            <Glyph $w={22} $up $f="bold 20px 'Liberation Serif',serif">,</Glyph>
            <Sep $m={3}/>
            <Slot $w={22}><DecL/></Slot>
            <Slot $w={22}><DecR/></Slot>
          </Row>
        </GroupBody>
        <GroupFoot $lp={14}>Number<Launcher><Launch/></Launcher></GroupFoot>
      </Group>

      <Group $w={186}>
        <GroupBody $pl={7} $pt={8}>
          <BigItem $w={70}><BigIcon><CondFmt/></BigIcon>Conditional<span>Formatting <Mini/></span></BigItem>
          <BigItem $w={58}><BigIcon><TblFmt/></BigIcon>Format as<span>Table <Mini/></span></BigItem>
          <BigItem $w={44}><BigIcon><CellSty/></BigIcon>Cell<span>Styles <Mini/></span></BigItem>
        </GroupBody>
        <GroupFoot>Styles</GroupFoot>
      </Group>

      <Group $w={91}>
        <GroupBody $col $pl={9}>
          <CellItem><InsIcon/>Insert<Slot $w={18} $ml={6}><Mini/></Slot></CellItem>
          <CellItem><DelIcon/>Delete<Slot $w={18} $ml={3}><Mini/></Slot></CellItem>
          <CellItem><FmtIcon/>Format<Mini/></CellItem>
        </GroupBody>
        <GroupFoot>Cells</GroupFoot>
      </Group>

      <Group $w={140}>
        <GroupBody $pl={12}>
          <Stack $w={34} $a="flex-start">
            <CellItem><Sigma/><Mini/></CellItem>
            <CellItem><FillDown/><Mini/></CellItem>
            <CellItem><Eraser/><Mini/></CellItem>
          </Stack>
          <BigItem $w={44} $mt={6}><BigIcon $h={31}><SortIcon/></BigIcon>Sort &<span>Filter <Mini/></span></BigItem>
          <BigItem $w={42} $mt={6}><BigIcon $h={31}><Lens/></BigIcon>Find &<span>Select <Mini/></span></BigItem>
        </GroupBody>
        <GroupFoot>Editing</GroupFoot>
      </Group>

      <Group $w={59}>
        <GroupBody $pt={5}>
          <BigItem $w={59}><BigIcon $h={32}><AddIns/></BigIcon>Add-ins</BigItem>
        </GroupBody>
        <GroupFoot>Add-ins</GroupFoot>
      </Group>
      <Caret><ChevronUp size={13} strokeWidth={1.4}/></Caret>
    </Ribbon>

    <FormulaBar>
      <NameBox>B16<ChevronDown size={12} strokeWidth={1.4}/></NameBox>
      <Dots>⋮</Dots>
      <FxBox><X size={14} strokeWidth={1}/><Check size={14} strokeWidth={1}/><Fx>fx</Fx></FxBox>
      <FormulaInput/>
    </FormulaBar>

    <SheetArea>
      <Sheet>
        <Corner/>
        {colNames.map(c=><ColHead key={c} $on={c==="B"}>{c}</ColHead>)}

        <RowHead>9</RowHead><Blanks n={18}/>

        <RowHead>10</RowHead><Blanks n={3}/>
        <Banner>Number of Imperfections</Banner><Blanks n={10}/>

        <RowHead>11</RowHead><Blanks n={2}/>
        <HeadCell $start>Date<Filter/></HeadCell>
        {[1,2,3,4,5].map(n=><HeadCell key={n}><Vertical>Index {n}</Vertical><Filter/></HeadCell>)}
        <HeadCell $c="#1f3d6e">Mean<Filter/></HeadCell>
        <HeadCell $c="#bf504d" $end><WideLabel>Average of<br/>All</WideLabel><Filter/></HeadCell>
        <Blanks n={8}/>

        {data.map((r,i)=>{
          const bg=i%2===0?"#dce6f1":"#fff";
          return <React.Fragment key={i}>
            <RowHead $on={i===4}>{i+12}</RowHead>
            <Blanks n={2} sel={i===4?1:undefined}/>
            <Td $start $bg={bg}>{r[0]}</Td>
            {r.slice(1,6).map((v,j)=><Td key={j} $bg={bg}>{v}</Td>)}
            <Td $bg="#f2f2f2" $c="#1f3864">{r[6]}</Td>
            <Td $bg="#f2f2f2" $c="#953735" $end>54.9</Td>
            <Blanks n={8}/>
          </React.Fragment>;
        })}
      </Sheet>
      <Macro $x={809} $y={57} $bg="#9bbb59" $edge="#708a3c">تحديث البيانات</Macro>
      <Macro $x={810} $y={130} $bg="#9bbb59" $edge="#708a3c">تلوين البيانات</Macro>
      <Macro $x={813} $y={206} $bg="#4f81bd" $edge="#2f5b8c">حذف بيانات<br/>الجدول</Macro>
      <Macro $x={811} $y={278} $bg="#4f81bd" $edge="#2f5b8c">إستعادة البيانات</Macro>
      <Macro $x={815} $y={354} $bg="#c0504d" $edge="#8c3533">إغلاق البرنامج</Macro>
      <VScroll><Tri $d="u"/><VThumb/><Tri $d="d"/></VScroll>
    </SheetArea>

    <TabStrip>
      <Nav><span>◂</span><span>▸</span></Nav>
      <SheetTab $on $w={192}>Manufacturing Imperfections</SheetTab>
      {sheets.map(([n,w])=><SheetTab key={n} $w={w}>{n}</SheetTab>)}
      <SheetTab $w={55} $tint>Charts</SheetTab>
      <Slot $w={20} $ml={30}><Plus/></Slot>
      <HScroll>
        <Dots $mr={8}>⋮</Dots>
        <Tri $d="l"/>
        <HThumb/>
        <Tri $d="r"/>
      </HScroll>
    </TabStrip>

    <StatusBar>
      Ready
      <Slot $w={16} $ml={18}><MacroIc/></Slot>
      <Slot $w={16} $ml={14}><A11y/></Slot>
      <StatusText>Accessibility: Investigate</StatusText>
      <StatusRight>
        <ViewBtn $on><VNormal/></ViewBtn>
        <ViewBtn><VLayout/></ViewBtn>
        <ViewBtn><VBreak/></ViewBtn>
        <Slot $w={14} $ml={3} $c="#555"><Minus size={9}/></Slot>
        <Zoomer/>
        <PlusMark>+</PlusMark>
        <Pct>100%</Pct>
      </StatusRight>
    </StatusBar>

    <Taskbar>
      <Tray>
        <Slot $w={26} $h={26}><Notif/></Slot>
        <Clock><span dir="rtl">٠٥:٠٣ ص</span><span>21/2/2025</span></Clock>
        <Slot $w={18} $ml={5}><Speaker/></Slot>
        <Slot $w={18} $ml={5}><Batt/></Slot>
        <Slot $w={16} $ml={4}><Tablet/></Slot>
        <Slot $w={18} $ml={6}><Wifi/></Slot>
        <Slot $w={18} $ml={4}><ChevronUp size={14} strokeWidth={1.5}/></Slot>
        <Slot $w={26} $ml={19}><News/></Slot>
      </Tray>
      <Banner2>
        <Brown/><WhiteBar/>
        <Signed dir="rtl">أبو تميم</Signed>
      </Banner2>
      <Slot $w={20} $ml={16}><TaskView/></Slot>
      <Slot $w={20} $ml={25}><S w={16} h={16}><circle cx="10" cy="10" r="7.5" stroke="#eee" strokeWidth="2.2"/></S></Slot>
      <SearchTask>
        <Scene width="76" height="38" viewBox="0 0 76 38">
          <path d="M6 33l14-14 12 12H14z" fill="#4aa84a"/><path d="M44 30l12-12 16 14-8 6H52z" fill="#4aa84a"/>
          <path d="M24 26l13-9 14 9-12 12H32z" fill="#3fd6c4"/>
          <path d="M2 38l18-14 12 14zM46 38l14-14 14 14z" fill="#2e7d3c"/>
          <rect x="31" y="13" width="8" height="25" fill="#7b5d55"/><rect x="32" y="14" width="6" height="8" fill="#e8e2d4"/>
          <path d="M35 3l5 11h-10z" fill="#6d5a70"/>
        </Scene>
        <span dir="rtl">اكتب هنا للبحث</span>
        <Slot $w={20} $ml={6}><Search size={17} strokeWidth={1.3} color="#444" style={{transform:"scaleX(-1)"}}/></Slot>
      </SearchTask>
      <WinBtn><WinLogo/></WinBtn>
    </Taskbar>

    <ActivateA dir="rtl">تنشيط Windows</ActivateA>
    <ActivateB dir="rtl">انتقل إلى الإعدادات لتنشيط Windows.</ActivateB>
    <MarkAr>مستقل</MarkAr>
    <MarkEn>mostaql.com</MarkEn>
  </Page>;
}
